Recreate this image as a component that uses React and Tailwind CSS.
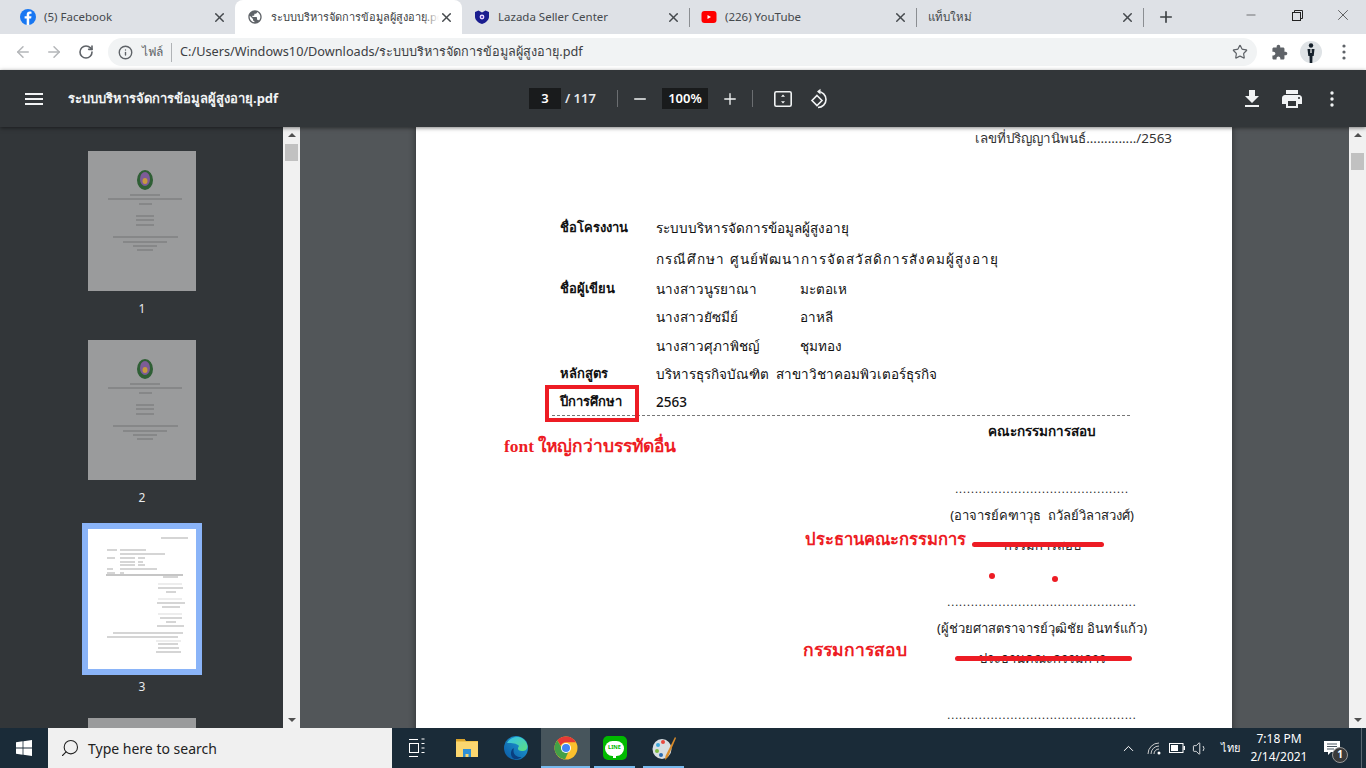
import React from 'react';
import { ArrowLeft, ArrowRight, RotateCw, Info, Star, X, Plus, Minus, Search, ChevronUp, Volume1 } from 'lucide-react';

const FacebookIcon = () => (
  <svg width="16" height="16" viewBox="0 0 16 16">
    <circle cx="8" cy="8" r="8" fill="#1877f2" />
    <path d="M9.2 16V9.6h1.9l.4-2.3H9.2V5.9c0-.7.3-1.2 1.3-1.2h1V2.7c-.5-.1-1.1-.2-1.7-.2-1.9 0-3.1 1.1-3.1 3.2v1.6H4.600v2.3h2.100V16z" fill="#fff" />
  </svg>
);

const GlobeIcon = () => (
  <svg width="18" height="18" viewBox="0 0 24 24" fill="#5f6368">
    <path d="M12 2C6.48 2 2 6.48 2 12s4.48 10 10 10 10-4.48 10-10S17.52 2 12 2zm-1 17.93c-3.95-.49-7-3.85-7-7.93 0-.62.08-1.21.21-1.79L9 15v1c0 1.1.9 2 2 2v1.93zm6.9-2.54c-.26-.81-1-1.39-1.9-1.39h-1v-3c0-.55-.45-1-1-1H8v-2h2c.55 0 1-.45 1-1V7h2c1.1 0 2-.9 2-2v-.41c2.93 1.19 5 4.06 5 7.41 0 2.08-.8 3.97-2.1 5.39z" />
  </svg>
);

const LazadaIcon = () => (
  <svg width="16" height="16" viewBox="0 0 16 16">
    <path d="M1 3l3.500-1.500L8 3.500l3.500-2L15 3v5c0 3-3.500 6-7 7-3.500-1-7-4-7-7z" fill="#1a1d8f" />
    <circle cx="8" cy="8" r="2.400" fill="#e8d8ff" />
    <circle cx="8" cy="8" r="1.100" fill="#3b2bb5" />
  </svg>
);

const YoutubeIcon = () => (
  <svg width="16" height="16" viewBox="0 0 16 16">
    <rect x="0.500" y="2" width="15" height="12" rx="3" fill="#f00" />
    <path d="M6.500 6v4L10 8z" fill="#fff" />
  </svg>
);

const tabs = [
  { icon: <FacebookIcon />, title: '(5) Facebook' },
  { icon: <GlobeIcon />, title: 'ระบบบริหารจัดการข้อมูลผู้สูงอายุ.pdf', active: true },
  { icon: <LazadaIcon />, title: 'Lazada Seller Center' },
  { icon: <YoutubeIcon />, title: '(226) YouTube', sep: true },
  { icon: null, title: 'แท็บใหม่', sep: true },
];

const Tab = ({ tab }) => (
  <div
    className={`relative flex h-[34px] w-[227px] items-center rounded-t-lg pl-[12px] pr-[8px] ${
      tab.active ? 'bg-white text-[11px] text-[#3c4043]' : 'text-[11.500px] text-[#45494d]'
    }`}
  >
    {tab.sep && <div className="absolute left-0 top-[8px] h-[19px] w-px bg-[#8b8e92]" />}
    {tab.icon && <div className="mr-[8px] flex w-[16px] justify-center">{tab.icon}</div>}
    <div className="relative flex-1 overflow-hidden whitespace-nowrap pr-2">
      {tab.title}
      {tab.active && <div className="absolute inset-y-0 right-0 w-[16px] bg-gradient-to-r from-transparent to-white" />}
    </div>
    <X size={15} strokeWidth={2.4} className="text-[#45494d]" />
  </div>
);

const TabStrip = () => (
  <div className="flex h-[34px] items-center bg-[#dee1e6] pl-[8px]">
    {tabs.map((t, i) => (
      <Tab key={i} tab={t} />
    ))}
    <div className="h-[19px] w-px bg-[#8b8e92]" />
    <Plus size={18} strokeWidth={2.2} className="ml-[13px] text-[#3c4043]" />
    <div className="ml-auto flex h-full items-start text-[#222]">
      <div className="flex h-[30px] w-[46px] items-center justify-center"><Minus size={14} strokeWidth={1} /></div>
      <div className="flex h-[30px] w-[46px] items-center justify-center">
        <svg width="11" height="11" viewBox="0 0 11 11" fill="none" stroke="#222" strokeWidth="1">
          <rect x="0.500" y="2.500" width="8" height="8" />
          <path d="M2.500 2.500v-2h8v8h-2" />
        </svg>
      </div>
      <div className="flex h-[30px] w-[46px] items-center justify-center"><X size={18} strokeWidth={0.9} /></div>
    </div>
  </div>
);

const AddressBar = () => (
  <div className="flex h-[36px] items-center bg-white pl-[14px]">
    <ArrowLeft size={18} className="text-[#b4b6b9]" />
    <ArrowRight size={18} className="ml-[13px] text-[#b4b6b9]" />
    <RotateCw size={16} strokeWidth={2.4} className="ml-[15px] text-[#5f6368]" />
    <div className="ml-[14px] flex h-[28px] w-[1149px] items-center rounded-full bg-[#f1f3f4] pl-[10px] pr-[9px]">
      <Info size={15} strokeWidth={2.2} className="text-[#5f6368]" />
      <span className="ml-[9px] text-[12px] text-[#5f6368]">ไฟล์</span>
      <div className="ml-[8px] h-[19px] w-px bg-[#b0b3b6]" />
      <span className="ml-[8px] text-[12.700px] text-[#3c4043]">C:/Users/Windows10/Downloads/ระบบบริหารจัดการข้อมูลผู้สูงอายุ.pdf</span>
      <Star size={16} strokeWidth={1.8} className="ml-auto text-[#5f6368]" />
    </div>
    <svg className="ml-[14px]" width="17" height="17" viewBox="0 0 24 24" fill="#5f6368">
      <path d="M20.500 11H19V7c0-1.100-.9-2-2-2h-4V3.500C13 2.120 11.880 1 10.500 1S8 2.120 8 3.500V5H4c-1.100 0-1.990.9-1.990 2v3.800H3.500c1.490 0 2.700 1.210 2.700 2.700s-1.210 2.700-2.700 2.700H2V20c0 1.100.9 2 2 2h3.800v-1.500c0-1.490 1.210-2.700 2.700-2.700 1.490 0 2.700 1.210 2.700 2.700V22H17c1.100 0 2-.9 2-2v-4h1.500c1.380 0 2.500-1.120 2.500-2.500S21.880 11 20.500 11z" />
    </svg>
    {/* profile photo */}
    <svg className="ml-[12px]" width="22" height="22" viewBox="0 0 22 22">
      <circle cx="11" cy="11" r="11" fill="#dfe3e6" />
      <circle cx="11" cy="4.500" r="2.200" fill="#15202a" />
      <path d="M7.500 8h7l-.8 7h-1.200l-.2 7h-2.600l-.2-7H8.300z" fill="#15202a" />
      <path d="M10.500 8h1l.2 4h-1.400z" fill="#f5f5f5" />
    </svg>
    <svg className="ml-[20px]" width="4" height="16" viewBox="0 0 4 16" fill="#5f6368">
      <circle cx="2" cy="2" r="1.600" /><circle cx="2" cy="8" r="1.600" /><circle cx="2" cy="14" r="1.600" />
    </svg>
  </div>
);

const PdfToolbar = () => (
  <div className="relative z-10 flex h-[57px] shrink-0 items-center bg-[#323639] text-white shadow-[0_1px_4px_rgba(0,0,0,0.5)]">
    <svg className="ml-[22px]" width="24" height="24" viewBox="0 0 24 24" fill="#f1f3f4">
      <path d="M3 18h18v-2H3v2zm0-5h18v-2H3v2zm0-7v2h18V6H3z" />
    </svg>
    <span className="ml-[22px] w-[461px] text-[13px] font-bold text-[#f1f3f4]">ระบบบริหารจัดการข้อมูลผู้สูงอายุ.pdf</span>
    <div className="flex h-[21px] w-[32px] items-center justify-center bg-[#191b1c] text-[13px] font-semibold">3</div>
    <span className="ml-[4px] w-[52px] text-[13px] font-semibold text-[#e8eaed]">/ 117</span>
    <div className="h-[17px] w-px bg-[#6b6e71]" />
    <Minus size={18} strokeWidth={2} className="ml-[13px] text-[#f1f3f4]" />
    <div className="ml-[13px] flex h-[21px] w-[46px] items-center justify-center bg-[#191b1c] text-[13px] font-semibold">100%</div>
    <Plus size={18} strokeWidth={1.8} className="ml-[13px] text-[#f1f3f4]" />
    <div className="ml-[13px] h-[17px] w-px bg-[#6b6e71]" />
    <svg className="ml-[20px]" width="20" height="20" viewBox="0 0 20 20" fill="none" stroke="#f1f3f4" strokeWidth="1.600">
      <rect x="1.800" y="2.800" width="16.400" height="14.400" rx="1.500" />
      <path d="M10 5.500l2 2.300H8zM10 14.500l2-2.300H8z" fill="#f1f3f4" stroke="none" />
    </svg>
    <svg className="ml-[16px]" width="20" height="22" viewBox="0 0 20 22" fill="none" stroke="#f1f3f4" strokeWidth="1.600">
      <path d="M8 7.500l5 5-5 5-5-5z" />
      <path d="M9 3.500a8 8 0 1 1 0 16" />
      <path d="M11.500 .8L8 3.500l3.500 3" fill="#f1f3f4" stroke="none" />
    </svg>
    <svg className="ml-[411px]" width="24" height="24" viewBox="0 0 24 24" fill="#f1f3f4">
      <path d="M19 9h-4V3H9v6H5l7 7 7-7zM5 18v2h14v-2H5z" />
    </svg>
    <svg className="ml-[16px]" width="24" height="24" viewBox="0 0 24 24" fill="#f1f3f4">
      <path d="M19 8H5c-1.660 0-3 1.340-3 3v6h4v4h12v-4h4v-6c0-1.660-1.340-3-3-3zm-3 11H8v-5h8v5zm3-7c-.55 0-1-.45-1-1s.45-1 1-1 1 .45 1 1-.45 1-1 1zm-1-9H6v4h12V3z" />
    </svg>
    <svg className="ml-[26px]" width="4" height="16" viewBox="0 0 4 16" fill="#f1f3f4">
      <circle cx="2" cy="2" r="1.700" /><circle cx="2" cy="8" r="1.700" /><circle cx="2" cy="14" r="1.700" />
    </svg>
  </div>
);

// tiny page previews, [y, x1, x2, opacity]
const coverLines = [
  [44, 42, 72], [48, 20, 94], [53, 51, 64], [65, 48, 66], [69, 48, 66], [74, 48, 66],
  [86, 25, 90], [91, 35, 79], [95, 45, 69], [99, 49, 65],
];
const signLines = [
  [9, 73, 100], [21, 19, 29], [21, 32, 58], [25, 32, 77], [29, 19, 27], [29, 32, 47], [29, 50, 57],
  [33, 32, 47], [33, 50, 55], [36, 32, 47], [36, 50, 57], [40, 19, 25], [40, 32, 69], [44, 19, 27],
  [44, 32, 36], [46, 18, 95, 0.6], [48, 75, 90], [55, 70, 94, 0.2], [59, 70, 95], [63, 78, 88],
  [70, 70, 94, 0.2], [74, 69, 97], [78, 74, 92], [85, 70, 94, 0.2], [89, 72, 94], [93, 78, 88],
  [97, 69, 96], [104, 25, 95], [108, 19, 90], [112, 68, 93, 0.2], [115, 70, 90], [119, 70, 91], [123, 68, 93],
];

const Thumb = ({ lines, bg, logo, label, selected }) => (
  <div className="flex flex-col items-center">
    <div className={selected ? 'border-[6px] border-[#8ab4f8]' : 'border-[6px] border-transparent'}>
      <svg width="108" height="140" viewBox="0 0 108 140" className="block">
        <rect width="108" height="140" fill={bg} />
        {logo && (
          <g>
            <ellipse cx="57" cy="29" rx="8" ry="10" fill="#2f5f35" />
            <ellipse cx="57" cy="28" rx="5" ry="7" fill="#7d5c97" />
            <ellipse cx="57" cy="30" rx="2.500" ry="3" fill="#c79a3e" />
          </g>
        )}
        {lines.map(([y, a, b, o], i) => (
          <rect key={i} x={a} y={y - 0.5} width={b - a} height="1" fill="#444" opacity={o || 0.45} />
        ))}
      </svg>
    </div>
    {label && <div className="h-[24px] text-[12px] leading-[24px] text-[#e8eaed]">{label}</div>}
  </div>
);

const ScrollBar = ({ thumbTop }) => (
  <div className="flex w-[17px] shrink-0 flex-col items-center bg-[#f1f1f1] pt-[6px]">
    <div className="h-0 w-0 border-x-[4px] border-b-[4px] border-x-transparent border-b-[#505050]" />
    <div className="h-[17px] w-[13px] bg-[#c1c1c1]" style={{ marginTop: thumbTop }} />
    <div className="mb-[6px] mt-auto h-0 w-0 border-x-[4px] border-t-[4px] border-x-transparent border-t-[#505050]" />
  </div>
);

const Sidebar = () => (
  <div className="flex w-[300px] shrink-0">
    <div className="flex w-[283px] flex-col items-center gap-[13px] overflow-hidden bg-[#323639] pl-[1px] pt-[18px]">
      <Thumb lines={coverLines} bg="#9a9b9c" logo label="1" />
      <Thumb lines={coverLines} bg="#9a9b9c" logo label="2" />
      <Thumb lines={signLines} bg="#ffffff" label="3" selected />
      <Thumb lines={[]} bg="#9a9b9c" />
    </div>
    <ScrollBar thumbTop={7} />
  </div>
);

const InfoRow = ({ label, value, surname, height, valueClass }) => (
  <div className={`grid grid-cols-[96px_144px_1fr] items-center font-medium ${height}`}>
    <span className="text-[13px] font-bold">{label}</span>
    <span className={surname ? '' : `col-span-2 whitespace-pre ${valueClass || ''}`}>{value}</span>
    {surname && <span>{surname}</span>}
  </div>
);

const Signature = ({ name, role, short }) => (
  <div className="flex w-[210px] flex-col items-center text-[#222]">
    <div className="whitespace-nowrap text-[11px] leading-[12px] tracking-[1px]">
      {short ? '............................................' : '................................................'}
    </div>
    <div className="mt-[8px] h-[24px] whitespace-pre leading-[24px]">{name}</div>
    <div className="mt-[6px] h-[24px] whitespace-nowrap leading-[24px]">{role}</div>
  </div>
);

const RedNote = ({ className, children }) => (
  <div className={`absolute whitespace-nowrap font-['Liberation_Serif',serif] font-bold text-[#ed1c24] ${className}`}>{children}</div>
);

const PdfPage = () => (
  <div className="relative h-[700px] w-[816px] shrink-0 bg-white text-[13.500px] text-[#111] shadow-[0_0_7px_rgba(0,0,0,0.45)]">
    <div className="absolute right-[60px] top-0 h-[24px] text-[13.400px] leading-[22px] text-[#333]">เลขที่ปริญญานิพนธ์............../2563</div>
    <div className="pl-[144px] pr-[100px] pt-[85px]">
      <InfoRow label="ชื่อโครงงาน" value="ระบบบริหารจัดการข้อมูลผู้สูงอายุ" height="h-[32px]" />
      <InfoRow label="" value="กรณีศึกษา ศูนย์พัฒนาการจัดสวัสดิการสังคมผู้สูงอายุ" height="h-[31px]" valueClass="tracking-[1px]" />
      <InfoRow label="ชื่อผู้เขียน" value="นางสาวนูรยาณา" surname="มะตอเห" height="h-[28px]" />
      <InfoRow label="" value="นางสาวยัซมีย์" surname="อาหลี" height="h-[29px]" />
      <InfoRow label="" value="นางสาวศุภาพิชญ์" surname="ชุมทอง" height="h-[28px]" />
      <InfoRow label="หลักสูตร" value="บริหารธุรกิจบัณฑิต  สาขาวิชาคอมพิวเตอร์ธุรกิจ" height="h-[28px]" />
      <InfoRow label="ปีการศึกษา" value="2563" height="h-[28px]" />
    </div>
    <div className="-mt-[1px] ml-[136px] w-[578px] border-t border-dashed border-[#777]" />
    <div className="ml-[521px] mt-[4px] w-[210px] text-center text-[13.500px] font-bold leading-[22px]">คณะกรรมการสอบ</div>
    <div className="ml-[521px] mt-[41px] flex flex-col gap-[39px] text-[13px]">
      <Signature short name="(อาจารย์คฑาวุธ  ถวัลย์วิลาสวงศ์)" role="กรรมการสอบ" />
      <Signature name="(ผู้ช่วยศาสตราจารย์วุฒิชัย อินทร์แก้ว)" role="ประธานคณะกรรมการ" />
      <Signature name="" role="" />
    </div>

    {/* annotations on top of the PDF */}
    <div className="absolute left-[129px] top-[258px] h-[37px] w-[94px] border-[4px] border-[#ed1c24]" />
    <RedNote className="left-[88px] top-[306px] text-[17.400px]">font ใหญ่กว่าบรรทัดอื่น</RedNote>
    <RedNote className="left-[389px] top-[401px] text-[16.600px]">ประธานคณะกรรมการ</RedNote>
    <RedNote className="left-[387px] top-[510px] text-[17.500px]">กรรมการสอบ</RedNote>
    <div className="absolute left-[556px] top-[415px] h-[5px] w-[132px] rounded-full bg-[#ed1c24]" />
    <div className="absolute left-[539px] top-[529px] h-[5px] w-[177px] rounded-full bg-[#ed1c24]" />
    <div className="absolute left-[573px] top-[446px] h-[6px] w-[6px] rounded-full bg-[#ed1c24]" />
    <div className="absolute left-[636px] top-[449px] h-[6px] w-[6px] rounded-full bg-[#ed1c24]" />
  </div>
);

const WinLogo = () => (
  <svg width="16" height="16" viewBox="0 0 16 16" fill="#fff">
    <path d="M0 2.200l6.600-.9v6.300H0zM7.400 1.200L16 0v7.600H7.400zM0 8.400h6.600v6.300L0 13.800zM7.400 8.400H16V16l-8.600-1.200z" />
  </svg>
);

const ExplorerIcon = () => (
  <svg width="22" height="20" viewBox="0 0 22 20">
    <path d="M0 1h8l2 2h12v16H0z" fill="#f0c24a" />
    <rect y="4" width="22" height="15" fill="#fbd66f" />
    <path d="M7 11h8v8h-2.500v-3h-3v3H7z" fill="#2f8fd6" />
    <rect x="0" y="1" width="9" height="2" fill="#d9a32c" />
  </svg>
);

const EdgeIcon = () => (
  <svg width="24" height="24" viewBox="0 0 24 24">
    <defs>
      <linearGradient id="edgeA" x1="0" y1="1" x2="1" y2="0">
        <stop offset="0" stopColor="#0c59a4" />
        <stop offset="1" stopColor="#1fa2d8" />
      </linearGradient>
      <linearGradient id="edgeB" x1="0" y1="0" x2="1" y2="1">
        <stop offset="0" stopColor="#35c1f1" />
        <stop offset="1" stopColor="#5be07e" />
      </linearGradient>
    </defs>
    <circle cx="12" cy="12" r="12" fill="url(#edgeA)" />
    <path d="M3 7C6 0 18-2 22.500 7 25 12 22 15 18 15c-3 0-4-1-4-2.500 0-1 .5-1.500 1-2.500-2-3-9-3-12-3z" fill="url(#edgeB)" />
    <path d="M9.500 15c0 4 4 6.500 8 6-2 1.800-4.500 2.500-7 2-4-1-5-8-1-11 .3 1 .1 1.800 0 3z" fill="#0a3f80" />
  </svg>
);

const ChromeIcon = () => (
  <svg width="24" height="24" viewBox="0 0 24 24">
    <circle cx="12" cy="12" r="11.500" fill="#fbc02d" />
    <path d="M12 .5a11.500 11.500 0 0 1 10 5.750H12a5.750 5.750 0 0 0-5.300 3.500L3.300 4.200A11.500 11.500 0 0 1 12 .5z" fill="#e53935" />
    <path d="M.5 12A11.500 11.500 0 0 1 3.300 4.200l5 8.700a5.750 5.750 0 0 0 6.200 2.500L11 23.400A11.500 11.500 0 0 1 .5 12z" fill="#43a047" />
    <circle cx="12" cy="12" r="5" fill="#fff" />
    <circle cx="12" cy="12" r="4" fill="#4285f4" />
  </svg>
);

const LineIcon = () => (
  <div className="flex h-[24px] w-[24px] items-center justify-center rounded-[5px] bg-[#00b900]">
    <div className="relative flex h-[15px] w-[19px] items-center justify-center rounded-[8px] bg-white text-[5.500px] font-bold leading-none text-[#00b900]">
      LINE
      <div className="absolute -bottom-[2px] left-[8px] h-[3px] w-[3px] bg-white" />
    </div>
  </div>
);

const PaintIcon = () => (
  <svg width="24" height="26" viewBox="0 0 24 26">
    <ellipse cx="10" cy="14" rx="9.500" ry="10" fill="#d8dee2" />
    <circle cx="6" cy="10" r="2" fill="#3fa9dc" />
    <circle cx="11" cy="7" r="2" fill="#e8483f" />
    <circle cx="5" cy="16" r="2" fill="#7dbb42" />
    <circle cx="9" cy="20" r="2" fill="#2b6cb0" />
    <path d="M23 2l1 1-8 19-3 3 .5-4z" fill="#d98c2b" />
  </svg>
);

const TaskItem = ({ width, active, running, children }) => (
  <div className={`relative flex shrink-0 items-center justify-center ${width} ${active ? 'bg-[#47555c]' : ''}`}>
    {children}
    {running && <div className={`absolute bottom-0 h-[2px] bg-[#76b9ed] ${active ? 'inset-x-0' : 'inset-x-[4px]'}`} />}
  </div>
);

const Taskbar = () => (
  <div className="flex h-[40px] shrink-0 items-stretch bg-[#1a2b38] text-white">
    <TaskItem width="w-[48px]"><WinLogo /></TaskItem>
    <div className="flex w-[344px] shrink-0 items-center bg-[#f0f0f0] pl-[12px] text-[14px] text-[#222]">
      <Search size={20} strokeWidth={1.3} className="-scale-x-100 text-[#222]" />
      <span className="ml-[8px]">Type here to search</span>
    </div>
    <TaskItem width="w-[50px]">
      <svg width="16" height="20" viewBox="0 0 16 20" fill="none" stroke="#fff" strokeWidth="1">
        <path d="M0 1.500h9M0 18.500h9" />
        <rect x=".5" y="5.500" width="9" height="9" />
        <path d="M12.500 1h3M12.500 5.500h3M12.500 10h3M12.500 14.500h3" strokeWidth="1.200" />
      </svg>
    </TaskItem>
    <TaskItem width="w-[49px]"><ExplorerIcon /></TaskItem>
    <TaskItem width="w-[50px]"><EdgeIcon /></TaskItem>
    <TaskItem width="w-[49px]" active running><ChromeIcon /></TaskItem>
    <TaskItem width="w-[49px]" running><LineIcon /></TaskItem>
    <TaskItem width="w-[49px]" running><PaintIcon /></TaskItem>

    <ChevronUp size={17} strokeWidth={1.400} className="ml-[432px] shrink-0 self-center" />
    <svg className="ml-[10px] shrink-0 self-center" width="16" height="14" viewBox="0 0 16 14" fill="none" stroke="#ccc" strokeWidth="1">
      <path d="M1 13a11 11 0 0 1 11-11M4 13a8 8 0 0 1 8-8M7 13a5 5 0 0 1 5-5" />
      <circle cx="12" cy="12" r="1.500" fill="#fff" stroke="none" />
    </svg>
    <svg className="ml-[6px] shrink-0 self-center" width="16" height="10" viewBox="0 0 16 10">
      <rect x=".5" y=".5" width="13.500" height="9" fill="none" stroke="#fff" />
      <rect x="2" y="2" width="7" height="6" fill="#fff" />
      <rect x="14.500" y="3" width="1.500" height="4" fill="#fff" />
    </svg>
    <Volume1 size={17} strokeWidth={1.200} className="ml-[7px] shrink-0 self-center" />
    <span className="ml-[12px] shrink-0 self-center text-[11px]">ไทย</span>
    <div className="ml-[9px] flex w-[60px] shrink-0 flex-col items-center justify-center whitespace-nowrap text-[12px] leading-[18px]">
      <span>7:18 PM</span>
      <span>2/14/2021</span>
    </div>
    <div className="relative ml-[15px] shrink-0 self-center">
      <svg width="16" height="15" viewBox="0 0 16 15" fill="#fff" className="block">
        <path d="M0 0h16v11H7l-3 3v-3H0z" />
        <path d="M3 3h10M3 5.500h10M3 8h7" stroke="#1a2b38" strokeWidth=".8" />
      </svg>
      <div className="absolute -bottom-[7px] left-[8px] flex h-[16px] w-[16px] items-center justify-center rounded-full border border-[#999] bg-[#3a3a3a] text-[10px] font-bold">1</div>
    </div>
    <div className="ml-auto mr-[4px] h-full w-px bg-[#5a6670]" />
  </div>
);

const App = () => (
  <div className="flex h-[768px] w-[1366px] flex-col overflow-hidden font-['Noto_Sans','Liberation_Sans',sans-serif]">
    <TabStrip />
    <AddressBar />
    <PdfToolbar />
    <div className="flex min-h-0 flex-1">
      <Sidebar />
      <div className="flex min-w-0 flex-1 overflow-hidden bg-[#525659] pl-[116px]">
        <PdfPage />
      </div>
      <ScrollBar thumbTop={16} />
    </div>
    <Taskbar />
  </div>
);

export default App;
